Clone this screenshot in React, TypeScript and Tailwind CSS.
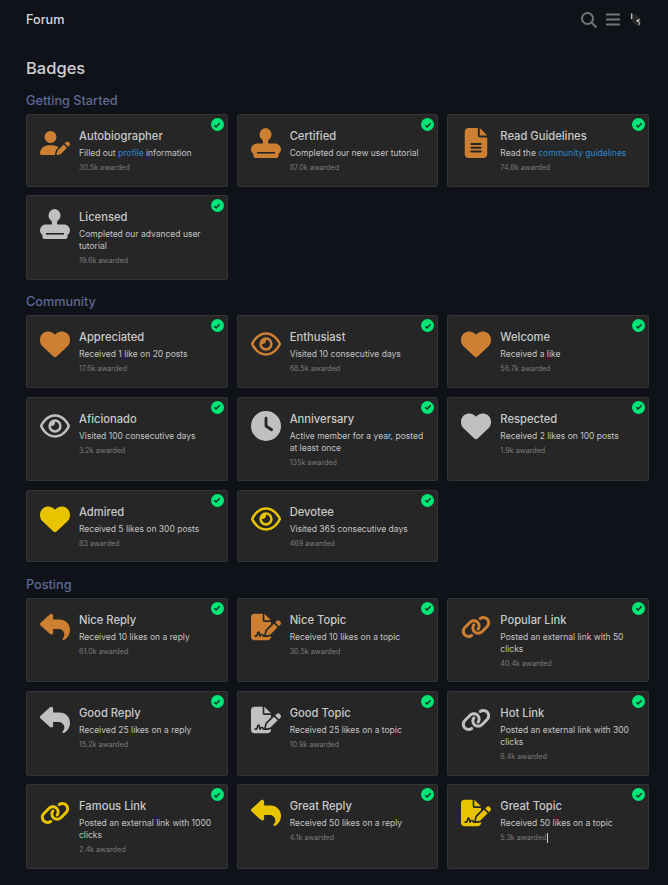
import React from "react";
import { FaUserPen, FaFileLines, FaHeart, FaRegEye, FaClock, FaReply, FaFileSignature, FaLink } from "react-icons/fa6";

const bronze = "text-[#cd7f32]";
const silver = "text-[#c0c0c0]";
const gold = "text-[#e7c300]";

type B = { icon: any; color: string; title: string; desc: React.ReactNode; n: string; cursor?: boolean };

const Link = ({ children }: { children: React.ReactNode }) => <span className="text-[#2a86d0]">{children}</span>;

const Stamp = ({ className }: { className?: string }) => (
  <svg viewBox="0 0 30 30" className={className} fill="currentColor">
    <path d="M15 0a6.5 6.5 0 0 0-6.5 6.5c0 2 .9 3.6 2.2 4.8.9.8 1.3 1.6 1.3 2.7 0 1-.4 1.6-1.5 1.6H6c-3.3 0-6 2.6-6 6 0 1.9 1 3.5 2.4 4.4V28c0 1.1.9 2 2 2h21.2c1.1 0 2-.9 2-2v-2c1.4-.9 2.4-2.5 2.4-4.4 0-3.4-2.7-6-6-6h-5.500c-1.100 0-1.500-.6-1.500-1.600 0-1.100.4-1.900 1.300-2.700 1.300-1.200 2.200-2.800 2.200-4.800A6.500 6.500 0 0 0 15 0z" />
    <rect x="6" y="24" width="18" height="1.600" fill="#262626" />
  </svg>
);

const started: B[] = [
  { icon: FaUserPen, color: bronze, title: "Autobiographer", desc: <>Filled out <Link>profile</Link> information</>, n: "30.5k" },
  { icon: Stamp, color: bronze, title: "Certified", desc: "Completed our new user tutorial", n: "87.0k" },
  { icon: FaFileLines, color: bronze, title: "Read Guidelines", desc: <>Read the <Link>community guidelines</Link></>, n: "74.8k" },
  { icon: Stamp, color: silver, title: "Licensed", desc: "Completed our advanced user tutorial", n: "19.6k" },
];
const community: B[] = [
  { icon: FaHeart, color: bronze, title: "Appreciated", desc: "Received 1 like on 20 posts", n: "17.6k" },
  { icon: FaRegEye, color: bronze, title: "Enthusiast", desc: "Visited 10 consecutive days", n: "68.5k" },
  { icon: FaHeart, color: bronze, title: "Welcome", desc: "Received a like", n: "56.7k" },
  { icon: FaRegEye, color: silver, title: "Aficionado", desc: "Visited 100 consecutive days", n: "3.2k" },
  { icon: FaClock, color: silver, title: "Anniversary", desc: "Active member for a year, posted at least once", n: "135k" },
  { icon: FaHeart, color: silver, title: "Respected", desc: "Received 2 likes on 100 posts", n: "1.9k" },
  { icon: FaHeart, color: gold, title: "Admired", desc: "Received 5 likes on 300 posts", n: "83" },
  { icon: FaRegEye, color: gold, title: "Devotee", desc: "Visited 365 consecutive days", n: "469" },
];
const posting: B[] = [
  { icon: FaReply, color: bronze, title: "Nice Reply", desc: "Received 10 likes on a reply", n: "61.0k" },
  { icon: FaFileSignature, color: bronze, title: "Nice Topic", desc: "Received 10 likes on a topic", n: "30.5k" },
  { icon: FaLink, color: bronze, title: "Popular Link", desc: "Posted an external link with 50 clicks", n: "40.4k" },
  { icon: FaReply, color: silver, title: "Good Reply", desc: "Received 25 likes on a reply", n: "15.2k" },
  { icon: FaFileSignature, color: silver, title: "Good Topic", desc: "Received 25 likes on a topic", n: "10.9k" },
  { icon: FaLink, color: silver, title: "Hot Link", desc: "Posted an external link with 300 clicks", n: "8.4k" },
  { icon: FaLink, color: gold, title: "Famous Link", desc: "Posted an external link with 1000 clicks", n: "2.4k" },
  { icon: FaReply, color: gold, title: "Great Reply", desc: "Received 50 likes on a reply", n: "4.1k" },
  { icon: FaFileSignature, color: gold, title: "Great Topic", desc: "Received 50 likes on a topic", n: "5.3k", cursor: true },
];

function Card({ b }: { b: B }) {
  const Icon = b.icon;
  return (
    <div className="relative flex gap-[9px] rounded-[2px] border border-[#333333] bg-[#262626] pl-[13px] pr-[9px] pt-[13px] pb-[11.5px]">
      <div className={`flex h-[30px] w-[30px] shrink-0 items-center justify-center ${b.color}`}>
        <Icon className="h-[30px] w-[30px]" />
      </div>
      <div className="min-w-0 flex-1">
        <div className="text-[11.2px] font-medium leading-[16px] text-[#c9c9c9]">{b.title}</div>
        <div className="mt-[3px] text-[8.5px] leading-[12px] text-[#c4c4c4]">{b.desc}</div>
        <div className="mt-[3px] flex items-center text-[7.2px] leading-[12px] text-[#7c7c7c]">
          {b.n} awarded
          {b.cursor && <span className="ml-[0.5px] h-[10px] w-px bg-[#cccccc]" />}
        </div>
      </div>
      <div className="absolute right-[3px] top-[3px] flex h-[13px] w-[13px] items-center justify-center rounded-full bg-[#00e676]">
        <svg viewBox="0 0 12 12" className="h-[8px] w-[8px]" fill="none" stroke="#1c2a22" strokeWidth="2">
          <path d="M2 6.5l2.6 2.6L10 3.4" />
        </svg>
      </div>
    </div>
  );
}

function Section({ title, items, cls }: { title: string; items: B[]; cls: string }) {
  return (
    <section className={cls}>
      <h2 className="text-[12.7px] font-medium leading-[16px] text-[#5d6a94]">{title}</h2>
      <div className="mt-[5px] grid grid-cols-3 gap-x-[9px] gap-y-[8.7px]">
        {items.map((b) => <Card key={b.title} b={b} />)}
      </div>
    </section>
  );
}

export default function App() {
  return (
    <div className="min-h-[885px] bg-[#10121a] pl-[26px] pr-[19px] pb-[16px]" style={{ fontFamily: "Inter, 'Noto Sans', sans-serif" }}>
      <header className="flex h-[39px] items-center justify-between">
        <div className="text-[12.7px] font-medium text-[#d8d8d8]">Forum</div>
        <div className="mr-[6px] flex items-center gap-[9px] text-[#757575]">
          <svg viewBox="0 0 16 16" className="h-[16px] w-[16px]" fill="none" stroke="currentColor" strokeWidth="2">
            <circle cx="6.500" cy="6.500" r="5.500" />
            <path d="M10.500 10.500l5 5" />
          </svg>
          <svg viewBox="0 0 14 14" className="h-[14px] w-[14px]" fill="currentColor">
            <rect x="0" y="0.500" width="14" height="2" rx="0.500" />
            <rect x="0" y="5.500" width="14" height="2" rx="0.500" />
            <rect x="0" y="10.500" width="14" height="2" rx="0.500" />
          </svg>
          <svg viewBox="0 0 14 16" className="ml-[1px] h-[16px] w-[13px]">
            <path d="M1 2l3-1 3 2 4 2 1 4-1 5-4 1-2-3-3-2-1-4z" fill="#262626" />
            <path d="M1 1h1.500v6H1zM7 8l3-1 1 1-2 1 2 2-1 3-1-1 1-2-3-1z" fill="#bdbdbd" />
          </svg>
        </div>
      </header>
      <h1 className="mt-[19px] text-[16.5px] font-medium leading-[20px] text-[#d0d0d0]">Badges</h1>
      <Section title="Getting Started" items={started} cls="mt-[15px]" />
      <Section title="Community" items={community} cls="mt-[14.7px]" />
      <Section title="Posting" items={posting} cls="mt-[14.7px]" />
    </div>
  );
}
